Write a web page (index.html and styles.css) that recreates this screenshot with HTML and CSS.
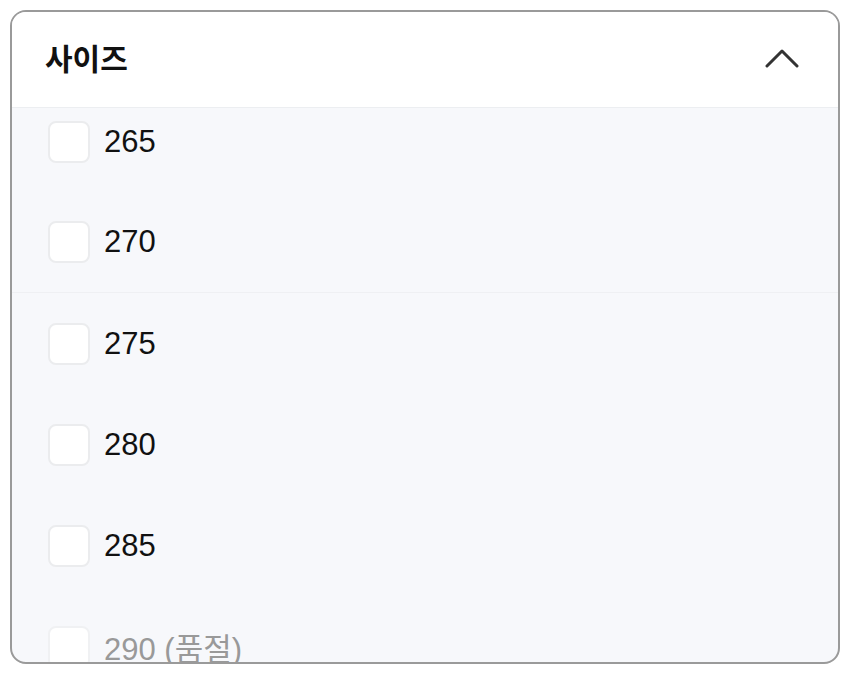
FILE: index.html
```html
<!DOCTYPE html>
<html lang="ko">
<head>
<meta charset="utf-8">
<link rel="stylesheet" href="styles.css">
</head>
<body>
<div class="card">
  <div class="header">
    <span class="title">사이즈</span>
    <svg class="chevron" width="34" height="20" viewBox="0 0 34 20"><path d="M2 18 L17 3 L32 18" fill="none" stroke="#333" stroke-width="3" stroke-linecap="round" stroke-linejoin="round"/></svg>
  </div>
  <div class="body">
    <ul class="list">
      <li class="row"><span class="box"></span><span class="label">265</span></li>
      <li class="row divided"><span class="box"></span><span class="label">270</span></li>
      <li class="row"><span class="box"></span><span class="label">275</span></li>
      <li class="row"><span class="box"></span><span class="label">280</span></li>
      <li class="row"><span class="box"></span><span class="label">285</span></li>
      <li class="row soldout"><span class="box"></span><span class="label">290 (품절)</span></li>
    </ul>
  </div>
</div>
</body>
</html>
```
FILE: styles.css
```css
html, body {
  margin: 0;
  padding: 0;
  background: #fff;
  font-family: "Liberation Sans", "Noto Sans CJK KR", sans-serif;
}
.card {
  margin: 10px 10px 0 10px;
  height: 650px;
  border: 2px solid #9a9a9a;
  border-radius: 16px;
  overflow: hidden;
  display: flex;
  flex-direction: column;
  background: #f7f8fb;
}
.header {
  flex: 0 0 auto;
  height: 95px;
  background: #fff;
  border-bottom: 1px solid #eceef1;
  display: flex;
  align-items: center;
  justify-content: space-between;
  padding: 0 39px 0 33px;
  position: relative;
  z-index: 1;
}
.title {
  font-family: "Noto Sans CJK KR", sans-serif;
  font-weight: 700;
  font-size: 30px;
  color: #111;
  margin-top: -6px;
}
.chevron {
  display: block;
  margin-top: -4px;
}
.body {
  flex: 1 1 auto;
  overflow: hidden;
}
.list {
  list-style: none;
  margin: -17px 0 0 0;
  padding: 0;
}
.row {
  height: 101px;
  display: flex;
  align-items: center;
  padding-left: 36px;
  box-sizing: border-box;
}
.divided {
  border-bottom: 1px solid #eff0f3;
}
.box {
  width: 42px;
  height: 42px;
  box-sizing: border-box;
  border: 2px solid #ebecee;
  border-radius: 8px;
  background: #fff;
  flex: 0 0 auto;
}
.label {
  margin-left: 14px;
  font-size: 31px;
  color: #111;
}
.soldout .label {
  color: #999;
}
.soldout .box {
  border-color: #f0f1f3;
}
```
